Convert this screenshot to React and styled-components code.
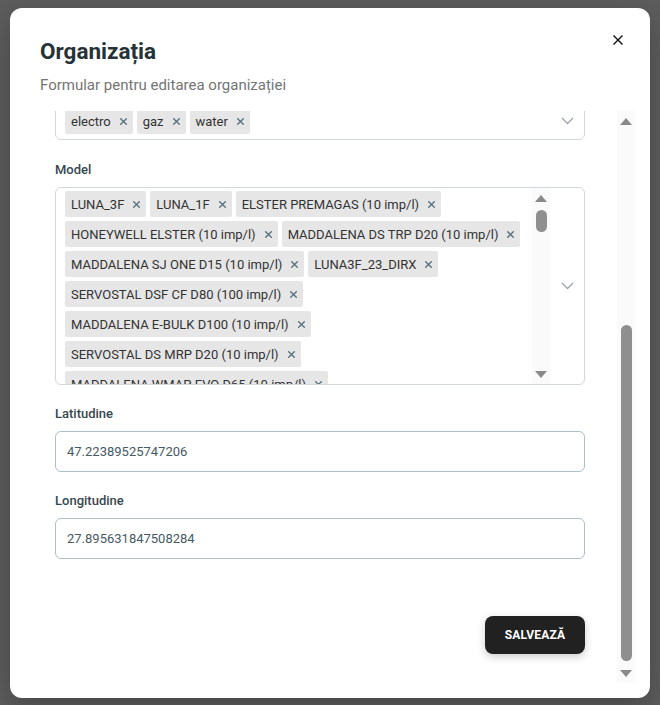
import React, { useLayoutEffect, useRef } from 'react';
import styled, { createGlobalStyle } from 'styled-components';

const GlobalStyle = createGlobalStyle`
  html, body {
    margin: 0;
    padding: 0;
  }

  body {
    font-family: Roboto, "Noto Sans", sans-serif;
    background: #5d5d5d;
  }
`;

const Backdrop = styled.div`
  width: 660px;
  height: 705px;
  box-sizing: border-box;
  padding: 8px 10px 7px 10px;
  display: flex;
  background: #5d5d5d;
`;

const Dialog = styled.div`
  flex: 1;
  min-height: 0;
  position: relative;
  display: flex;
  flex-direction: column;
  box-sizing: border-box;
  padding: 30px 15px 15px 30px;
  background: #fff;
  border-radius: 12px;
  box-shadow: 0 10px 30px rgba(0, 0, 0, 0.25);
`;

const CloseButton = styled.button`
  position: absolute;
  top: 22px;
  right: 22px;
  width: 20px;
  height: 20px;
  padding: 0;
  border: none;
  background: transparent;
  color: #111;
  display: flex;
  align-items: center;
  justify-content: center;
  cursor: pointer;
`;

const Title = styled.h2`
  margin: 0;
  font-size: 22.5px;
  line-height: 1.2;
  font-weight: 700;
  color: #263238;
`;

const Subtitle = styled.p`
  margin: 10px 0 0;
  font-size: 15px;
  line-height: 1.4;
  color: #757575;
`;

const Body = styled.div`
  flex: 1;
  min-height: 0;
  margin-top: 15px;
  display: flex;
`;

const ScrollArea = styled.div`
  flex: 1;
  min-width: 0;
  overflow-y: auto;
  padding: 0 32px 0 15px;
  scrollbar-width: none;

  &::-webkit-scrollbar {
    display: none;
  }
`;

/* scrollbar drawn like the browser's classic one */
const Track = styled.div`
  width: 18px;
  flex-shrink: 0;
  display: flex;
  flex-direction: column;
  background: #fafafa;
`;

const ArrowButton = styled.div`
  height: 20px;
  flex-shrink: 0;
  display: flex;
  align-items: center;
  justify-content: center;

  &::after {
    content: '';
    width: 0;
    height: 0;
    border-left: 6px solid transparent;
    border-right: 6px solid transparent;
    ${(p) => (p.$down ? 'border-top: 7px solid #8a8a8a;' : 'border-bottom: 7px solid #8a8a8a;')}
  }
`;

const Rail = styled.div`
  flex: 1;
  display: flex;
  flex-direction: column;
  justify-content: ${(p) => (p.$atEnd ? 'flex-end' : 'flex-start')};
  padding: 2px 0;
`;

const Thumb = styled.div`
  width: 11px;
  height: ${(p) => p.$size}px;
  margin: 0 auto;
  border-radius: 6px;
  background: #8f8f8f;
`;

const Scrollbar = ({ thumb, atEnd }) => (
  <Track>
    <ArrowButton />
    <Rail $atEnd={atEnd}>
      <Thumb $size={thumb} />
    </Rail>
    <ArrowButton $down />
  </Track>
);

const Form = styled.div`
  display: flex;
  flex-direction: column;
  padding-top: 37px;
`;

const Field = styled.div`
  display: flex;
  flex-direction: column;
  margin-bottom: ${(p) => p.$gap ?? 19}px;
`;

const Label = styled.label`
  font-size: 13px;
  line-height: 18px;
  font-weight: 500;
  color: #37474f;
  margin-bottom: 8px;
`;

const TextInput = styled.input`
  height: 41px;
  box-sizing: border-box;
  border: 1px solid #b0bec5;
  border-radius: 6px;
  padding: 0 11px;
  font-family: inherit;
  font-size: 13px;
  color: #455a64;
  outline: none;
  background: #fff;
`;

const SelectBox = styled.div`
  display: flex;
  align-items: stretch;
  box-sizing: border-box;
  min-height: 38px;
  border: 1px solid #d3d6da;
  border-radius: 6px;
  background: #fff;
`;

const Values = styled.div`
  flex: 1;
  min-width: 0;
  display: flex;
  flex-wrap: wrap;
  align-content: flex-start;
  align-items: center;
  padding: ${(p) => (p.$height ? '1px 7px' : '3px 7px')};
  height: ${(p) => (p.$height ? `${p.$height}px` : 'auto')};
  box-sizing: border-box;
  overflow: hidden;
`;

const Chip = styled.span`
  display: inline-flex;
  align-items: center;
  height: 26px;
  margin: 2px;
  padding: 0 6px;
  background: #e6e6e6;
  border-radius: 2px;
  font-size: 13px;
  color: #333;
  white-space: nowrap;
`;

const ChipRemove = styled.span`
  display: inline-flex;
  margin-left: 9px;
  color: #546e7a;
`;

const Indicator = styled.div`
  width: 34px;
  flex-shrink: 0;
  display: flex;
  align-items: center;
  justify-content: center;
  color: #9aa5ad;
`;

const Actions = styled.div`
  display: flex;
  justify-content: flex-end;
  margin-top: 38px;
  padding-bottom: 29px;
`;

const SaveButton = styled.button`
  width: 100px;
  height: 38px;
  border: none;
  border-radius: 8px;
  background: #212121;
  color: #fff;
  font-family: inherit;
  font-size: 12px;
  font-weight: 700;
  letter-spacing: 0.2px;
  box-shadow: 0 3px 8px rgba(0, 0, 0, 0.2);
  cursor: pointer;
`;

const XIcon = ({ size = 7, width = 1.8 }) => (
  <svg width={size} height={size} viewBox="0 0 10 10">
    <path d="M1 1L9 9M9 1L1 9" stroke="currentColor" strokeWidth={width} strokeLinecap="square" />
  </svg>
);

const Chevron = () => (
  <svg width="13" height="8" viewBox="0 0 13 8">
    <path d="M1 1l5.5 5.5L12 1" fill="none" stroke="currentColor" strokeWidth="1.3" />
  </svg>
);

const resources = ['electro', 'gaz', 'water'];

const extraBrands = ['MADDALENA CPR', 'SERVOSTAL DS', 'ELSTER V200', 'ITRON FLODIS', 'SENSUS 420PC', 'ZENNER MTKD'];
const extraSizes = ['D15', 'D20', 'D25', 'D32', 'D40', 'D50', 'D65', 'D80'];

const models = [
  'LUNA_3F',
  'LUNA_1F',
  'ELSTER PREMAGAS (10 imp/l)',
  'HONEYWELL ELSTER (10 imp/l)',
  'MADDALENA DS TRP D20 (10 imp/l)',
  'MADDALENA SJ ONE D15 (10 imp/l)',
  'LUNA3F_23_DIRX',
  'SERVOSTAL DSF CF D80 (100 imp/l)',
  'MADDALENA E-BULK D100 (10 imp/l)',
  'SERVOSTAL DS MRP D20 (10 imp/l)',
  'MADDALENA WMAP EVO D65 (10 imp/l)',
  ...extraBrands.flatMap((b) => extraSizes.map((s) => `${b} ${s} (10 imp/l)`)),
];

const MultiSelect = ({ items, height, thumb }) => (
  <SelectBox>
    <Values $height={height}>
      {items.map((item) => (
        <Chip key={item}>
          {item}
          <ChipRemove>
            <XIcon />
          </ChipRemove>
        </Chip>
      ))}
    </Values>
    {thumb && <Scrollbar thumb={thumb} />}
    <Indicator>
      <Chevron />
    </Indicator>
  </SelectBox>
);

const App = () => {
  const scrollRef = useRef(null);

  useLayoutEffect(() => {
    if (scrollRef.current) {
      scrollRef.current.scrollTop = scrollRef.current.scrollHeight;
    }
  }, []);

  return (
    <>
      <GlobalStyle />
      <Backdrop>
        <Dialog>
          <CloseButton aria-label="close">
            <XIcon size={10} width={1.4} />
          </CloseButton>
          <Title>Organizația</Title>
          <Subtitle>Formular pentru editarea organizației</Subtitle>
          <Body>
            <ScrollArea ref={scrollRef}>
              <Form>
                <Field>
                  <Label>Denumire</Label>
                  <TextInput defaultValue="Apă-Canal Bălți" />
                </Field>
                <Field>
                  <Label>Cod fiscal</Label>
                  <TextInput defaultValue="1003602004371" />
                </Field>
                <Field>
                  <Label>Adresa</Label>
                  <TextInput defaultValue="str. Ștefan cel Mare 12" />
                </Field>
                <Field $gap={21}>
                  <Label>Resurse</Label>
                  <MultiSelect items={resources} />
                </Field>
                <Field $gap={20}>
                  <Label>Model</Label>
                  <MultiSelect items={models} height={196} thumb={22} />
                </Field>
                <Field $gap={20}>
                  <Label>Latitudine</Label>
                  <TextInput defaultValue="47.22389525747206" />
                </Field>
                <Field $gap={19}>
                  <Label>Longitudine</Label>
                  <TextInput defaultValue="27.895631847508284" />
                </Field>
                <Actions>
                  <SaveButton>SALVEAZĂ</SaveButton>
                </Actions>
              </Form>
            </ScrollArea>
            <Scrollbar thumb={336} atEnd />
          </Body>
        </Dialog>
      </Backdrop>
    </>
  );
};

export default App;
